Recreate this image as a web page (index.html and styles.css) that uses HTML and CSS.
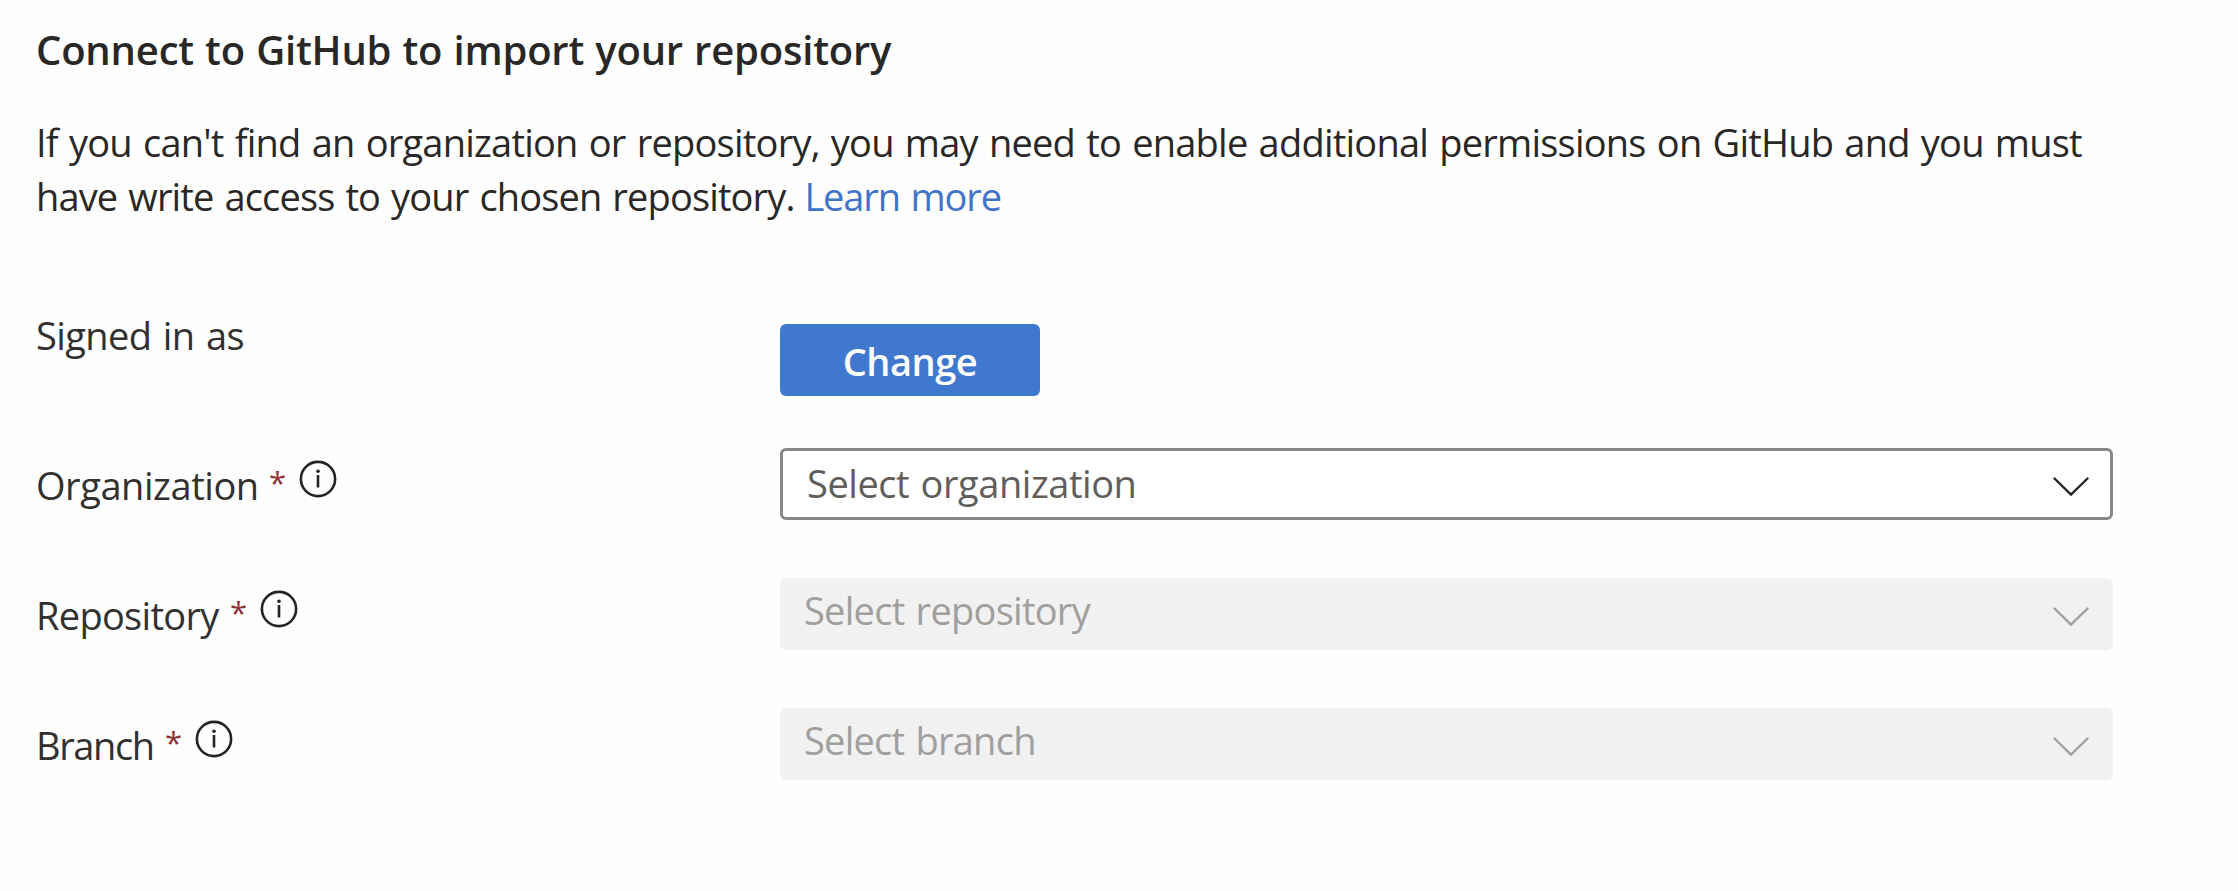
FILE: index.html
```html
<!DOCTYPE html>
<html lang="en">
<head>
<meta charset="utf-8">
<title>Connect to GitHub</title>
<link rel="stylesheet" href="styles.css">
</head>
<body>
<main class="page">
  <h1 class="title">Connect to GitHub to import your repository</h1>
  <p class="intro"><span class="intro-first">If you can't find an organization or repository, you may need to enable additional permissions on GitHub and you must</span><br><span class="intro-second">have write access to your chosen repository.</span> <a class="link">Learn more</a></p>
  <div class="form">
    <div class="row row-signed">
      <div class="label label-signed">Signed in as</div>
      <button class="button" type="button">Change</button>
    </div>
    <div class="row">
      <div class="label"><span class="name name-organization">Organization</span><span class="star">*</span>
        <svg class="info" viewBox="0 0 38 38"><circle cx="19" cy="19" r="17.1"/><path d="M19 15v12.5"/><circle class="dot" cx="19" cy="11.2" r="1.8"/></svg>
      </div>
      <div class="select"><span class="value value-organization">Select organization</span><svg class="chevron" viewBox="0 0 36 20"><path d="M1.5 1.5 18 17.5 34.500 1.5"/></svg></div>
    </div>
    <div class="row">
      <div class="label"><span class="name name-repository">Repository</span><span class="star">*</span>
        <svg class="info" viewBox="0 0 38 38"><circle cx="19" cy="19" r="17.1"/><path d="M19 15v12.5"/><circle class="dot" cx="19" cy="11.2" r="1.8"/></svg>
      </div>
      <div class="select disabled"><span class="value value-repository">Select repository</span><svg class="chevron" viewBox="0 0 36 20"><path d="M1.5 1.5 18 17.5 34.500 1.5"/></svg></div>
    </div>
    <div class="row">
      <div class="label"><span class="name name-branch">Branch</span><span class="star">*</span>
        <svg class="info" viewBox="0 0 38 38"><circle cx="19" cy="19" r="17.1"/><path d="M19 15v12.5"/><circle class="dot" cx="19" cy="11.2" r="1.8"/></svg>
      </div>
      <div class="select disabled"><span class="value value-branch">Select branch</span><svg class="chevron" viewBox="0 0 36 20"><path d="M1.5 1.5 18 17.5 34.500 1.5"/></svg></div>
    </div>
  </div>
</main>
</body>
</html>
```
FILE: styles.css
```css
* { box-sizing: border-box; }
body {
  margin: 0;
  background: #fefefe;
  color: #292827;
  font: 400 38px/54px "Open Sans", "Noto Sans", sans-serif;
  word-spacing: 2px;
}
.page { padding: 23px 125px 0 36px; }
.title { margin: 0; font-size: 40px; font-weight: 600; line-height: 54px; letter-spacing: -0.2px; word-spacing: 1px; }
.intro { margin: 38px 0 0; white-space: nowrap; }
.intro-first { letter-spacing: -0.77px; }
.intro-second { letter-spacing: -0.86px; }
.link { margin-left: -2px; color: #4074c8; letter-spacing: -1.15px; }
.form { display: flex; flex-direction: column; gap: 58px; margin-top: 101px; }
.row { display: grid; grid-template-columns: 744px 1333px; height: 72px; }
.row-signed { margin-bottom: -6px; }
.label { display: flex; align-items: flex-start; padding-top: 10px; color: #323130; }
.label-signed { margin-top: -16px; padding-top: 0; letter-spacing: -0.57px; }
.name-organization { width: 222px; letter-spacing: -0.44px; }
.name-repository { width: 183px; letter-spacing: -0.7px; }
.name-branch { width: 118px; letter-spacing: -1.4px; }
.star { width: 30px; margin-left: 11px; color: #8e3236; font-size: 31px; line-height: 48px; }
.info { width: 38px; height: 38px; margin-top: 2px; fill: none; stroke: #252423; stroke-width: 2.6; }
.info .dot { fill: #252423; stroke: none; }
.button {
  width: 260px;
  height: 72px;
  padding: 3px 0 0;
  border: 0;
  border-radius: 6px;
  background: #4077cf;
  color: #fff;
  font: 600 38px/69px "Open Sans", sans-serif;
  letter-spacing: -0.45px;
}
.select {
  display: flex;
  justify-content: space-between;
  align-items: flex-start;
  height: 72px;
  padding: 0 21px 0 24px;
  border: 3px solid #888;
  border-radius: 6px;
  background: #fff;
  color: #605e5c;
}
.value { line-height: 65px; }
.chevron { width: 36px; height: 20px; margin-top: 26px; fill: none; stroke: #252423; stroke-width: 2.4; stroke-linecap: round; }
.disabled { padding: 0 24px; border: 0; background: #f1f1f1; color: #a19f9d; }
.disabled .chevron { margin-top: 29px; stroke: #a19f9d; }
.value-organization { letter-spacing: -0.45px; }
.value-repository { letter-spacing: -0.73px; }
.value-branch { letter-spacing: -0.75px; }
```
